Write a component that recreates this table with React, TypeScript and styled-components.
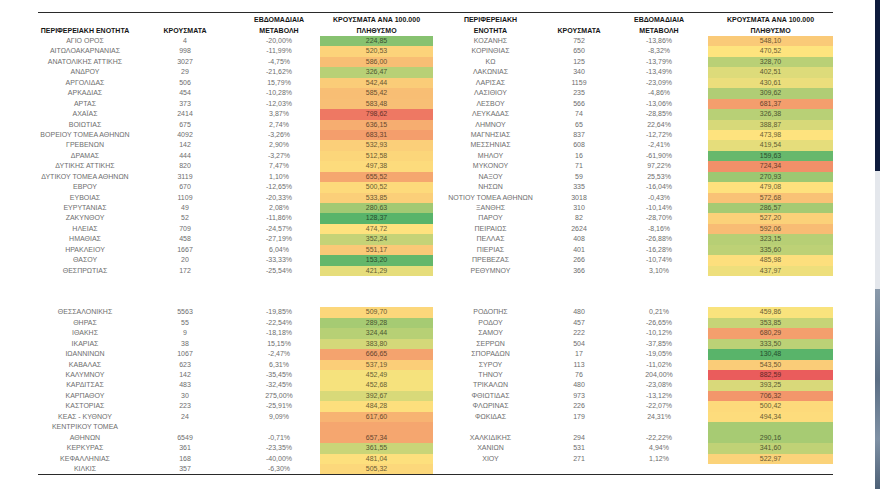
import styled, { createGlobalStyle } from "styled-components";

// ── Types / data ──────────────────────────────────────────────────────────────

type Entry = [string, string, string, number] | null;

interface RowData {
  left: Entry;
  right: Entry;
  tall?: boolean;
}

const TOP_LEFT: Entry[] = [
  ["ΑΓΙΟ ΟΡΟΣ", "4", "-20,00%", 224.85],
  ["ΑΙΤΩΛΟΑΚΑΡΝΑΝΙΑΣ", "998", "-11,99%", 520.53],
  ["ΑΝΑΤΟΛΙΚΗΣ ΑΤΤΙΚΗΣ", "3027", "-4,75%", 586.0],
  ["ΑΝΔΡΟΥ", "29", "-21,62%", 326.47],
  ["ΑΡΓΟΛΙΔΑΣ", "506", "15,79%", 542.44],
  ["ΑΡΚΑΔΙΑΣ", "454", "-10,28%", 585.42],
  ["ΑΡΤΑΣ", "373", "-12,03%", 583.48],
  ["ΑΧΑΪΑΣ", "2414", "3,87%", 798.62],
  ["ΒΟΙΩΤΙΑΣ", "675", "2,74%", 636.15],
  ["ΒΟΡΕΙΟΥ ΤΟΜΕΑ ΑΘΗΝΩΝ", "4092", "-3,26%", 683.31],
  ["ΓΡΕΒΕΝΩΝ", "142", "2,90%", 532.93],
  ["ΔΡΑΜΑΣ", "444", "-3,27%", 512.58],
  ["ΔΥΤΙΚΗΣ ΑΤΤΙΚΗΣ", "820", "7,47%", 497.38],
  ["ΔΥΤΙΚΟΥ ΤΟΜΕΑ ΑΘΗΝΩΝ", "3119", "1,10%", 655.52],
  ["ΕΒΡΟΥ", "670", "-12,65%", 500.52],
  ["ΕΥΒΟΙΑΣ", "1109", "-20,33%", 533.85],
  ["ΕΥΡΥΤΑΝΙΑΣ", "49", "2,08%", 280.63],
  ["ΖΑΚΥΝΘΟΥ", "52", "-11,86%", 128.37],
  ["ΗΛΕΙΑΣ", "709", "-24,57%", 474.72],
  ["ΗΜΑΘΙΑΣ", "458", "-27,19%", 352.24],
  ["ΗΡΑΚΛΕΙΟΥ", "1667", "6,04%", 551.17],
  ["ΘΑΣΟΥ", "20", "-33,33%", 153.2],
  ["ΘΕΣΠΡΩΤΙΑΣ", "172", "-25,54%", 421.29],
];

const TOP_RIGHT: Entry[] = [
  ["ΚΟΖΑΝΗΣ", "752", "-13,86%", 548.1],
  ["ΚΟΡΙΝΘΙΑΣ", "650", "-8,32%", 470.52],
  ["ΚΩ", "125", "-13,79%", 328.7],
  ["ΛΑΚΩΝΙΑΣ", "340", "-13,49%", 402.51],
  ["ΛΑΡΙΣΑΣ", "1159", "-23,09%", 430.61],
  ["ΛΑΣΙΘΙΟΥ", "235", "-4,86%", 309.62],
  ["ΛΕΣΒΟΥ", "566", "-13,06%", 681.37],
  ["ΛΕΥΚΑΔΑΣ", "74", "-28,85%", 326.38],
  ["ΛΗΜΝΟΥ", "65", "22,64%", 388.87],
  ["ΜΑΓΝΗΣΙΑΣ", "837", "-12,72%", 473.98],
  ["ΜΕΣΣΗΝΙΑΣ", "608", "-2,41%", 419.54],
  ["ΜΗΛΟΥ", "16", "-61,90%", 159.63],
  ["ΜΥΚΟΝΟΥ", "71", "97,22%", 724.34],
  ["ΝΑΞΟΥ", "59", "25,53%", 270.93],
  ["ΝΗΣΩΝ", "335", "-16,04%", 479.08],
  ["ΝΟΤΙΟΥ ΤΟΜΕΑ ΑΘΗΝΩΝ", "3018", "-0,43%", 572.68],
  ["ΞΑΝΘΗΣ", "310", "-10,14%", 286.57],
  ["ΠΑΡΟΥ", "82", "-28,70%", 527.2],
  ["ΠΕΙΡΑΙΩΣ", "2624", "-8,16%", 592.06],
  ["ΠΕΛΛΑΣ", "408", "-26,88%", 323.15],
  ["ΠΙΕΡΙΑΣ", "401", "-16,28%", 335.6],
  ["ΠΡΕΒΕΖΑΣ", "266", "-10,74%", 485.98],
  ["ΡΕΘΥΜΝΟΥ", "366", "3,10%", 437.97],
];

const BOTTOM: RowData[] = [
  { left: ["ΘΕΣΣΑΛΟΝΙΚΗΣ", "5563", "-19,85%", 509.7], right: ["ΡΟΔΟΠΗΣ", "480", "0,21%", 459.86] },
  { left: ["ΘΗΡΑΣ", "55", "-22,54%", 289.28], right: ["ΡΟΔΟΥ", "457", "-26,65%", 353.85] },
  { left: ["ΙΘΑΚΗΣ", "9", "-18,18%", 324.44], right: ["ΣΑΜΟΥ", "222", "-10,12%", 680.29] },
  { left: ["ΙΚΑΡΙΑΣ", "38", "15,15%", 383.8], right: ["ΣΕΡΡΩΝ", "504", "-37,85%", 333.5] },
  { left: ["ΙΩΑΝΝΙΝΩΝ", "1067", "-2,47%", 666.65], right: ["ΣΠΟΡΑΔΩΝ", "17", "-19,05%", 130.48] },
  { left: ["ΚΑΒΑΛΑΣ", "623", "6,31%", 537.19], right: ["ΣΥΡΟΥ", "113", "-11,02%", 543.5] },
  { left: ["ΚΑΛΥΜΝΟΥ", "142", "-35,45%", 452.49], right: ["ΤΗΝΟΥ", "76", "204,00%", 882.59] },
  { left: ["ΚΑΡΔΙΤΣΑΣ", "483", "-32,45%", 452.68], right: ["ΤΡΙΚΑΛΩΝ", "480", "-23,08%", 393.25] },
  { left: ["ΚΑΡΠΑΘΟΥ", "30", "275,00%", 392.67], right: ["ΦΘΙΩΤΙΔΑΣ", "973", "-13,12%", 706.32] },
  { left: ["ΚΑΣΤΟΡΙΑΣ", "223", "-25,91%", 484.28], right: ["ΦΛΩΡΙΝΑΣ", "226", "-22,07%", 500.42] },
  { left: ["ΚΕΑΣ - ΚΥΘΝΟΥ", "24", "9,09%", 617.6], right: ["ΦΩΚΙΔΑΣ", "179", "24,31%", 494.34] },
  {
    left: ["ΚΕΝΤΡΙΚΟΥ ΤΟΜΕΑ\nΑΘΗΝΩΝ", "6549", "-0,71%", 657.34],
    right: ["ΧΑΛΚΙΔΙΚΗΣ", "294", "-22,22%", 290.16],
    tall: true,
  },
  { left: ["ΚΕΡΚΥΡΑΣ", "361", "-23,35%", 361.55], right: ["ΧΑΝΙΩΝ", "531", "4,94%", 341.6] },
  { left: ["ΚΕΦΑΛΛΗΝΙΑΣ", "168", "-40,00%", 481.04], right: ["ΧΙΟΥ", "271", "1,12%", 522.97] },
  { left: ["ΚΙΛΚΙΣ", "357", "-6,30%", 505.32], right: null },
];

const TOP: RowData[] = TOP_LEFT.map((l, i) => ({ left: l, right: TOP_RIGHT[i] }));

// ── Colour scale (green → yellow → red, like the spreadsheet) ───────────────

const LOW = [88, 180, 106];
const MID = [254, 228, 126];
const HIGH = [234, 92, 92];
const MIN_V = 128.37;
const MID_V = 470;
const MAX_V = 882.59;

function mix(a: number[], b: number[], t: number) {
  return a.map((v, i) => Math.round(v + (b[i] - v) * t));
}

function scale(v: number) {
  const c =
    v <= MID_V
      ? mix(LOW, MID, (v - MIN_V) / (MID_V - MIN_V))
      : mix(MID, HIGH, (v - MID_V) / (MAX_V - MID_V));
  const ink = c.map((x) => Math.round(x * 0.42));
  return { bg: `rgb(${c.join(",")})`, ink: `rgb(${ink.join(",")})` };
}

function fmt(v: number) {
  return v.toFixed(2).replace(".", ",");
}

// ── Styled components ─────────────────────────────────────────────────────────

const GlobalStyle = createGlobalStyle`
  html, body { margin: 0; padding: 0; background: #ffffff; }
  body { font-family: "Liberation Sans", Arial, sans-serif; }
`;

const COLS = "94px 106px 82px 113px 115px 62px 98px 125px";
const ROW_H = 10.45;

const Page = styled.div`
  width: 880px;
  height: 489px;
  display: flex;
  overflow: hidden;
  background: #ffffff;
`;

const Main = styled.div`
  flex: 1;
  padding: 12px 0 0 38px;
`;

const Sheet = styled.div`
  width: 795px;
  border-top: 1.5px solid #2a2a2a;
  border-bottom: 1.5px solid #2a2a2a;
`;

const HeaderRow = styled.div`
  display: grid;
  grid-template-columns: ${COLS};
  height: 23px;
  align-items: end;
`;

const HeadCell = styled.div`
  display: flex;
  justify-content: center;
  text-align: center;
  white-space: pre;
  font-size: 7px;
  font-weight: 700;
  line-height: ${ROW_H}px;
  color: #151515;
`;

const Row = styled.div<{ $tall?: boolean }>`
  display: grid;
  grid-template-columns: ${COLS};
  height: ${(p) => (p.$tall ? ROW_H * 2 : ROW_H)}px;
`;

const Cell = styled.div`
  display: flex;
  align-items: flex-end;
  justify-content: center;
  text-align: center;
  white-space: pre;
  font-size: 7px;
  line-height: ${ROW_H}px;
  color: #6e6e6e;
`;

const RateCell = styled(Cell)<{ $bg?: string; $ink?: string }>`
  background: ${(p) => p.$bg ?? "transparent"};
  color: ${(p) => p.$ink ?? "#333"};
`;

const Spacer = styled.div`
  height: ${ROW_H * 3}px;
`;

const SideStrip = styled.div`
  width: 5px;
  display: flex;
  flex-direction: column;
`;

const StripBlock = styled.div<{ $bg: string; $h?: number }>`
  background: ${(p) => p.$bg};
  height: ${(p) => (p.$h ? `${p.$h}px` : "auto")};
  flex: ${(p) => (p.$h ? "none" : "1")};
`;

// ── Components ────────────────────────────────────────────────────────────────

function Half({ e }: { e: Entry }) {
  if (!e) {
    return (
      <>
        <Cell />
        <Cell />
        <Cell />
        <RateCell />
      </>
    );
  }
  const c = scale(e[3]);
  return (
    <>
      <Cell>{e[0]}</Cell>
      <Cell>{e[1]}</Cell>
      <Cell>{e[2]}</Cell>
      <RateCell $bg={c.bg} $ink={c.ink}>{fmt(e[3])}</RateCell>
    </>
  );
}

function Rows({ rows }: { rows: RowData[] }) {
  return (
    <>
      {rows.map((r, i) => (
        <Row key={i} $tall={r.tall}>
          <Half e={r.left} />
          <Half e={r.right} />
        </Row>
      ))}
    </>
  );
}

export default function App() {
  return (
    <Page>
      <GlobalStyle />
      <Main>
        <Sheet>
          <HeaderRow>
            <HeadCell>ΠΕΡΙΦΕΡΕΙΑΚΗ ΕΝΟΤΗΤΑ</HeadCell>
            <HeadCell>ΚΡΟΥΣΜΑΤΑ</HeadCell>
            <HeadCell>{"ΕΒΔΟΜΑΔΙΑΙΑ\nΜΕΤΑΒΟΛΗ"}</HeadCell>
            <HeadCell>{"ΚΡΟΥΣΜΑΤΑ ΑΝΑ 100.000\nΠΛΗΘΥΣΜΟ"}</HeadCell>
            <HeadCell>{"ΠΕΡΙΦΕΡΕΙΑΚΗ\nΕΝΟΤΗΤΑ"}</HeadCell>
            <HeadCell>ΚΡΟΥΣΜΑΤΑ</HeadCell>
            <HeadCell>{"ΕΒΔΟΜΑΔΙΑΙΑ\nΜΕΤΑΒΟΛΗ"}</HeadCell>
            <HeadCell>{"ΚΡΟΥΣΜΑΤΑ ΑΝΑ 100.000\nΠΛΗΘΥΣΜΟ"}</HeadCell>
          </HeaderRow>
          <Rows rows={TOP} />
          <Spacer />
          <Rows rows={BOTTOM} />
        </Sheet>
      </Main>
      <SideStrip>
        <StripBlock $bg="#0e1b3c" $h={171} />
        <StripBlock $bg="#e4e7ec" $h={118} />
        <StripBlock $bg="linear-gradient(180deg, #8a9aab 0%, #5b6e84 45%, #7f91a5 75%, #4d6076 100%)" />
      </SideStrip>
    </Page>
  );
}
